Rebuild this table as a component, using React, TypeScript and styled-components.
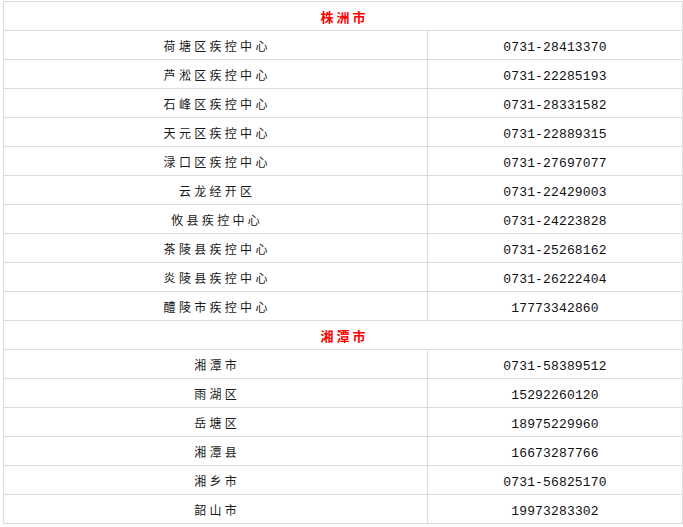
import React from "react";
import styled, { createGlobalStyle } from "styled-components";

const Global = createGlobalStyle`
  html, body { margin: 0; padding: 0; background: #fff; }
  body { font-family: "Noto Sans CJK SC", sans-serif; }
`;

const Wrap = styled.div`
  padding: 1px 0 0 3px;
`;

const Table = styled.table`
  border-collapse: collapse;
  width: 679px;
  table-layout: fixed;
`;

const Row = styled.tr`
  height: 29px;
`;

const Cell = styled.td`
  border: 1px solid #dcdcdc;
  padding: 0 0 2px 0;
  height: 26px;
  text-align: center;
  vertical-align: middle;
  color: #222;
`;

const Name = styled.span`
  font-family: "Noto Sans CJK SC", sans-serif;
  font-size: 12px;
  letter-spacing: 3.3px;
  margin-right: -3.3px;
  color: #1a1a1a;
`;

const Phone = styled.span`
  font-family: "Liberation Mono", monospace;
  font-size: 13px;
  letter-spacing: 0.15px;
  color: #111;
`;

const City = styled.span`
  font-family: "Noto Sans CJK SC", sans-serif;
  font-size: 13px;
  font-weight: 700;
  letter-spacing: 3px;
  margin-right: -3px;
  color: #ff0000;
`;

type Item = { city: string } | { name: string; phone: string };

const data: Item[] = [
  { city: "株洲市" },
  { name: "荷塘区疾控中心", phone: "0731-28413370" },
  { name: "芦淞区疾控中心", phone: "0731-22285193" },
  { name: "石峰区疾控中心", phone: "0731-28331582" },
  { name: "天元区疾控中心", phone: "0731-22889315" },
  { name: "渌口区疾控中心", phone: "0731-27697077" },
  { name: "云龙经开区", phone: "0731-22429003" },
  { name: "攸县疾控中心", phone: "0731-24223828" },
  { name: "茶陵县疾控中心", phone: "0731-25268162" },
  { name: "炎陵县疾控中心", phone: "0731-26222404" },
  { name: "醴陵市疾控中心", phone: "17773342860" },
  { city: "湘潭市" },
  { name: "湘潭市", phone: "0731-58389512" },
  { name: "雨湖区", phone: "15292260120" },
  { name: "岳塘区", phone: "18975229960" },
  { name: "湘潭县", phone: "16673287766" },
  { name: "湘乡市", phone: "0731-56825170" },
  { name: "韶山市", phone: "19973283302" },
];

export default function App() {
  return (
    <>
      <Global />
      <Wrap>
        <Table>
          <colgroup>
            <col style={{ width: 424 }} />
            <col style={{ width: 255 }} />
          </colgroup>
          <tbody>
            {data.map((d, i) =>
              "city" in d ? (
                <Row key={i}>
                  <Cell colSpan={2}>
                    <City>{d.city}</City>
                  </Cell>
                </Row>
              ) : (
                <Row key={i}>
                  <Cell>
                    <Name>{d.name}</Name>
                  </Cell>
                  <Cell>
                    <Phone>{d.phone}</Phone>
                  </Cell>
                </Row>
              )
            )}
          </tbody>
        </Table>
      </Wrap>
    </>
  );
}
